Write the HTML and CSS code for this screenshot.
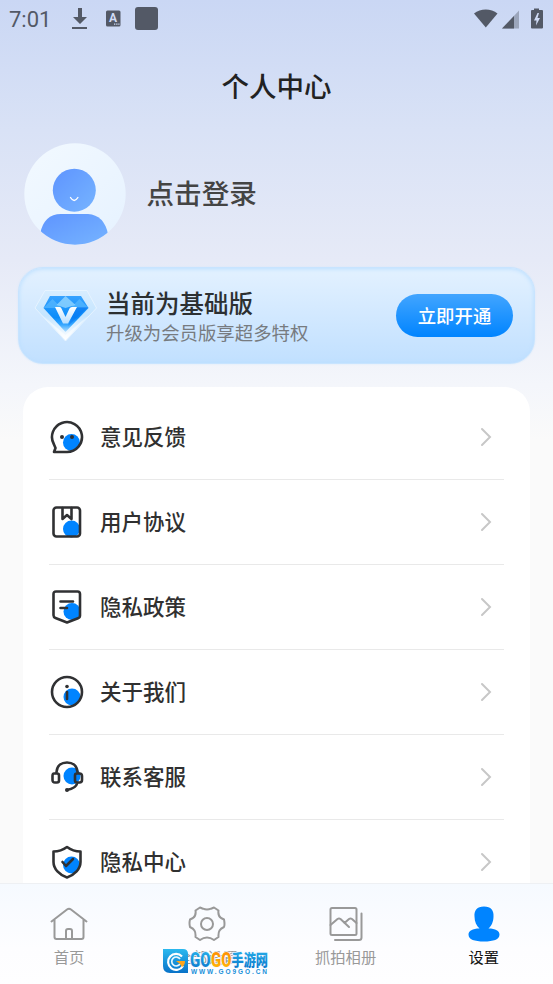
FILE: index.html
```html
<!DOCTYPE html>
<html lang="zh-CN">
<head>
<meta charset="utf-8">
<title>个人中心</title>
<link rel="stylesheet" href="styles.css">
</head>
<body>
<div class="screen">
  <header class="status">
    <span class="clock">7:01</span>
    <svg class="status-left" width="86" height="26" viewBox="0 0 86 26">
      <path d="M6 2h4v9h5l-7 7-7-7h5zM0 21h15v2H0z"/>
      <rect x="34" y="4.500" width="14.500" height="16" rx="1.500"/>
      <rect x="63" y="1" width="23" height="23" rx="3"/>
      <text class="badge-letter" x="37" y="16">A</text>
      <path class="pale" d="M42 17.500h1.300v1.300H42zM44.200 17.500h1.300v1.300h-1.300zM46.300 17.500h1.200v1.300h-1.200z"/>
    </svg>
    <svg class="status-right" width="72" height="26" viewBox="0 0 72 26">
      <path d="M1 7.500C7.500 2.200 18 2.200 24.500 7.500L12.800 21.500z"/>
      <path opacity=".4" d="M29 22.500 46 4.500v18z"/><path d="M29 22.500 41 10v12.500z"/>
      <path d="M58 5q0-1 1-1h2V2.500h5V4h3q1 0 1 1v16.500q0 1-1 1H59q-1 0-1-1z"/>
      <path class="pale" d="M64.500 7 61 14.500h2.500l-.5 5 4-7.500h-2.500l1.500-5z"/>
    </svg>
  </header>
  <h1 class="title">个人中心</h1>

  <section class="profile">
    <svg width="102" height="102" viewBox="0 0 102 102">
      <defs>
        <linearGradient id="face" x1="0" y1="0" x2="1" y2="1"><stop offset="0" stop-color="#5e94ff"/><stop offset="1" stop-color="#76b4ff"/></linearGradient>
        <linearGradient id="halo" x1="0" y1="0" x2="1" y2="1"><stop offset="0" stop-color="#f2f9ff"/><stop offset="1" stop-color="#e6f2ff"/></linearGradient>
        <clipPath id="round"><circle cx="51" cy="51" r="50.700"/></clipPath>
      </defs>
      <circle cx="51" cy="51" r="50.700" fill="url(#halo)"/>
      <circle cx="50.300" cy="47.200" r="21.500" fill="url(#face)"/>
      <path clip-path="url(#round)" fill="url(#face)" d="M16 102V91q4-20 21-20h27q16 1 20 20v11z"/>
      <path d="M46.500 54.500q3.700 6 7.400 0" fill="none" stroke="#fff" stroke-width="1.400" stroke-linecap="round"/>
    </svg>
    <span class="login">点击登录</span>
  </section>

  <section class="member">
    <svg class="gem" width="64" height="54" viewBox="0 0 64 54">
      <defs>
        <linearGradient id="gemOuter" x1="0" y1="0" x2="0" y2="1"><stop offset="0" stop-color="#d7edff"/><stop offset=".5" stop-color="#c5e5ff"/><stop offset="1" stop-color="#fff"/></linearGradient>
        <linearGradient id="gemCore" x1="0" y1="0" x2="0" y2="1"><stop offset="0" stop-color="#36a2ff"/><stop offset=".6" stop-color="#0b8cf9"/><stop offset=".8" stop-color="#38a8ff"/><stop offset="1" stop-color="#b5e0ff"/></linearGradient>
        <linearGradient id="gemV" x1="0" y1="0" x2="0" y2="1"><stop offset="0" stop-color="#fff"/><stop offset="1" stop-color="#b7deff"/></linearGradient>
      </defs>
      <path d="M11 1.500h42L62.500 19 31.500 52 1 19z" fill="url(#gemOuter)" stroke="#e7f4ff" stroke-width="1"/>
      <path d="m8 26 23.500 20L55 26l-23.500 25z" fill="#fff" opacity=".5"/>
      <path d="M16 7h31l7.500 12-23 24L9.500 19z" fill="url(#gemCore)"/>
      <path d="m9.500 19 9-9 9 9zM54.500 19l-9-9-9 9z" fill="#6dc6ff" opacity=".5"/>
      <path d="m31.500 7-9 9 9 3 10-3z" fill="#9bd9ff" opacity=".75"/>
      <path d="M42 18h12.500L34 37z" fill="#0068ed" opacity=".4"/>
      <path d="M21 18h4.500q1.500 0 2 1.500l4 8.500 4-8.500q.7-1.500 2.500-1.500H43l-9 16.500h-5z" fill="url(#gemV)"/>
    </svg>
    <div class="member-copy">
      <strong class="plan">当前为基础版</strong>
      <span class="perk">升级为会员版享超多特权</span>
    </div>
    <button class="open" type="button">立即开通</button>
  </section>

  <main class="menu">
    <div class="row">
      <svg class="icon" viewBox="0 0 34 34"><circle class="dot" cx="21.500" cy="22.500" r="8.500"/><path d="M4 24.500A15 15 0 1 1 17 32H4l1.500-4z"/><circle class="mark" cx="12" cy="17" r="2"/><circle class="mark" cx="22" cy="17" r="2"/></svg>
      <span class="label">意见反馈</span><svg class="chevron" viewBox="0 0 12 20"><path d="m2 2 8 8-8 8"/></svg>
    </div>
    <div class="row">
      <svg class="icon" viewBox="0 0 34 34"><circle class="dot" cx="21.500" cy="24" r="8.500"/><rect x="3.500" y="2.500" width="26.500" height="29" rx="3"/><path d="M12.500 3v11l4.500-4 4.500 4V3"/></svg>
      <span class="label">用户协议</span><svg class="chevron" viewBox="0 0 12 20"><path d="m2 2 8 8-8 8"/></svg>
    </div>
    <div class="row">
      <svg class="icon" viewBox="0 0 34 34"><circle class="dot" cx="22" cy="21.500" r="8.500"/><path d="M6 1.500h21.500q2.500 0 2.500 2.500v21.500q0 2-2 2.700L17 32.500 5.500 28q-2-.8-2-2.800V4q0-2.500 2.500-2.500zM10.500 11.500H23M10.500 18H17"/></svg>
      <span class="label">隐私政策</span><svg class="chevron" viewBox="0 0 12 20"><path d="m2 2 8 8-8 8"/></svg>
    </div>
    <div class="row">
      <svg class="icon" viewBox="0 0 34 34"><circle class="dot" cx="22" cy="22" r="8.500"/><circle cx="17" cy="17" r="15"/><circle class="mark" cx="17" cy="11.500" r="1.800"/><path d="M17 17v7"/></svg>
      <span class="label">关于我们</span><svg class="chevron" viewBox="0 0 12 20"><path d="m2 2 8 8-8 8"/></svg>
    </div>
    <div class="row">
      <svg class="icon" viewBox="0 0 34 34"><circle class="dot" cx="22" cy="16" r="8.500"/><path d="M6.500 13v-1C7 5.500 11.500 2.500 17 2.500S27 5.500 27.500 12v1M4 13.500h3q2 0 2 2v5q0 2-2 2H5q-2.500 0-2.500-2.500v-4q0-2.500 1.500-2.500zM27 13.500h2.500q2.500 0 2.500 2.500v4q0 2.500-2.500 2.500H27q-2 0-2-2v-5q0-2 2-2zM27.500 22.500q-1.500 6-10.500 7.500"/><circle class="mark" cx="17" cy="30" r="2"/></svg>
      <span class="label">联系客服</span><svg class="chevron" viewBox="0 0 12 20"><path d="m2 2 8 8-8 8"/></svg>
    </div>
    <div class="row">
      <svg class="icon" viewBox="0 0 34 34"><circle class="dot" cx="21.500" cy="20" r="8.500"/><path d="M17 2q6 4.500 13.500 4.500V17c0 7-6 13-13.500 15.500C9.500 30 3.500 24 3.500 17V6.500Q11 6.500 17 2zM12.500 17l3.500 4 7-7"/></svg>
      <span class="label">隐私中心</span><svg class="chevron" viewBox="0 0 12 20"><path d="m2 2 8 8-8 8"/></svg>
    </div>
  </main>

  <nav class="tabs">
    <div class="tab"><svg viewBox="0 0 38 38"><path d="M1.500 17.500 17 5.500q2-1.500 4 0l15.500 12M4.500 16v17q0 2 2 2h25q2 0 2-2V16M16 35V27q0-2 2-2h2q2 0 2 2v8"/></svg><span>首页</span></div>
    <div class="tab"><svg viewBox="0 0 38 38"><path d="M12 3.500l3 1.200q4 1.800 8 0l3-1.200 4.500 3q-.8 5 2.500 7.500l3 1.500q1 5 0 7.500c-4 2-6 4-5.500 10L26 36q-7-5-14 0l-4.500-3c.5-6-1.500-8-5.500-10q-1-4 0-7.500l3-1.500Q8.300 11.500 7.500 6.500z"/><circle cx="19" cy="20" r="6"/></svg><span>全部设置</span></div>
    <div class="tab"><svg viewBox="0 0 38 38"><rect x="3.500" y="4" width="26" height="27" rx="1.500"/><path d="M34.500 9.500v24q0 2.500-2.500 2.500H8M3.500 21l7-6q1.500-1 3 0l8.500 8M17.500 19l4.500-4q1.500-1 3 0l4.500 4"/></svg><span>抓拍相册</span></div>
    <div class="tab active"><svg viewBox="0 0 38 38"><path d="M19 2.500c7 0 10 4 9.500 10 0 5-2 9.500-5 12 7 0 11 2.500 11 6 0 5-6 7-15.500 7s-15.500-2-15.500-7c0-3.500 4-6 11-6-3-2.500-5-7-5-12-.5-6 2.500-10 9.500-10z"/></svg><span>设置</span></div>
  </nav>

  <div class="watermark">
    <svg width="112" height="30" viewBox="0 0 112 30">
      <defs>
        <linearGradient id="sky" x1="0" y1="0" x2="0" y2="1"><stop offset="0" stop-color="#2cb9ef"/><stop offset="1" stop-color="#0872c8"/></linearGradient>
        <linearGradient id="sun" x1="0" y1="0" x2="0" y2="1"><stop offset="0" stop-color="#ff8600"/><stop offset="1" stop-color="#ffbc08"/></linearGradient>
      </defs>
      <path d="M0 1h20q5 0 5 5v19H7q-7 0-7-7z" fill="url(#sky)"/>
      <path d="M19 8.500A8 8 0 1 0 20 18" fill="none" stroke="#fff" stroke-width="2.200"/>
      <path d="M17 11a4.500 4.500 0 1 0 0 5" fill="none" stroke="#e8f8ff" stroke-width="1.700"/>
      <path d="M13 13h9q0 4-3 6l-2-3z" fill="#ffa51a"/>
      <text class="wm-latin" x="27" y="18.500" textLength="20.500" lengthAdjust="spacingAndGlyphs" fill="url(#sky)">GO</text>
      <text class="wm-latin" x="48" y="18.500" textLength="20.500" lengthAdjust="spacingAndGlyphs" fill="url(#sun)">GO</text>
      <text class="wm-cjk" x="68.500" y="17.500" textLength="36.500" lengthAdjust="spacingAndGlyphs" fill="url(#sky)">手游网</text>
      <text class="wm-url" x="28" y="25.500" textLength="76">WWW.GO9GO.CN</text>
    </svg>
  </div>
</div>
</body>
</html>
```

FILE: styles.css
```css
* { box-sizing: border-box; }
body {
  margin: 0;
  font-family: "Noto Sans CJK SC", sans-serif;
}
.screen {
  position: relative;
  display: flex;
  flex-direction: column;
  width: 553px;
  height: 984px;
  overflow: hidden;
  background: linear-gradient(#cad7f4 0, #d9e2f6 130px, #e6eaf7 260px, #f4f6fb 385px, #fafafa 440px);
}
.status {
  display: flex;
  align-items: center;
  flex: none;
  height: 38px;
  padding: 0 8px 0 9px;
  fill: #535966;
}
.clock {
  width: 63px;
  padding-top: 2px;
  color: #535966;
  font: 22px/36px Roboto, sans-serif;
}
.status-left { margin-bottom: 1px; }
.status-right { margin-left: auto; }
.badge-letter { fill: #d0dbf5; font: bold 12px Roboto, sans-serif; }
.pale { fill: #d0dbf5; }
.title {
  flex: none;
  height: 94px;
  margin: 0 0 2px;
  color: #222;
  font-size: 27.500px;
  font-weight: 500;
  line-height: 94px;
  text-align: center;
}
.profile {
  display: flex;
  align-items: center;
  flex: none;
  height: 102px;
  margin-top: 9px;
  padding-left: 24px;
}
.login {
  margin: 0 0 4px 20.500px;
  color: #444;
  font-size: 27.600px;
  font-weight: 500;
  line-height: 40px;
}
.member {
  display: flex;
  align-items: center;
  flex: none;
  height: 97px;
  margin: 22px 18px 0;
  padding: 0 21px 0 15px;
  border: 1px solid #c8e4ff;
  border-radius: 25px;
  background: linear-gradient(#e3f1ff, #c1e0ff);
  box-shadow: inset 0 1px 4px #b9deff, 0 0 2px #d4e7fa;
}
.member-copy {
  display: flex;
  flex-direction: column;
  margin: 2px 0 0 8px;
}
.plan {
  color: #2c3032;
  font-size: 24.500px;
  font-weight: 500;
  line-height: 32px;
}
.perk {
  color: #777b80;
  font-size: 18.400px;
  line-height: 27px;
}
.open {
  width: 117px;
  height: 43px;
  margin-left: auto;
  padding: 0;
  border: 0;
  border-radius: 22px;
  background: linear-gradient(#42a5ff, #0084ff);
  color: #fff;
  font: 500 18.400px/43px "Noto Sans CJK SC", sans-serif;
}
.menu {
  flex: 1;
  min-height: 0;
  overflow: hidden;
  margin: 23px 23px 0;
  padding: 8px 26px 0;
  border-radius: 25px 25px 0 0;
  background: #fff;
}
.row {
  display: flex;
  align-items: center;
  height: 85px;
  padding: 0 12px 0 1px;
  border-bottom: 1px solid #e9e9e9;
}
.icon {
  width: 34px;
  height: 34px;
  fill: none;
  stroke: #303133;
  stroke-width: 2.600;
  stroke-linecap: round;
  stroke-linejoin: round;
}
.icon .dot { fill: #0084ff; stroke: none; }
.icon .mark { fill: #303133; stroke: none; }
.label {
  margin: 0 0 2px 16px;
  color: #303030;
  font-size: 21.500px;
  font-weight: 500;
  line-height: 32px;
}
.chevron {
  width: 12px;
  height: 20px;
  margin-left: auto;
  fill: none;
  stroke: #c7c7c7;
  stroke-width: 2;
  stroke-linecap: round;
}
.tabs {
  display: flex;
  flex: none;
  height: 101px;
  border-top: 1px solid #eef0f3;
  background: linear-gradient(#f6faff, #fdfdff 65%, #fefeff);
}
.tab {
  display: flex;
  flex: 1;
  flex-direction: column;
  align-items: center;
  padding-top: 20px;
  color: #999;
  font-size: 15.300px;
  line-height: 23px;
}
.tab svg {
  width: 38px;
  height: 38px;
  margin-bottom: 3px;
  fill: none;
  stroke: #999;
  stroke-width: 2;
  stroke-linecap: round;
  stroke-linejoin: round;
}
.tab.active { color: #111; }
.tab.active svg { fill: #0084ff; stroke: none; }
.watermark {
  position: absolute;
  left: 163px;
  top: 948px;
  height: 30px;
}
.wm-latin { font: 900 21px Roboto, sans-serif; }
.wm-cjk { font: 900 16px "Noto Sans CJK SC", sans-serif; }
.wm-latin, .wm-cjk { stroke: #f4f9ff; stroke-width: 1.500; paint-order: stroke; }
.wm-url { fill: #1790da; font: bold 6.500px "Liberation Sans", sans-serif; }
```
